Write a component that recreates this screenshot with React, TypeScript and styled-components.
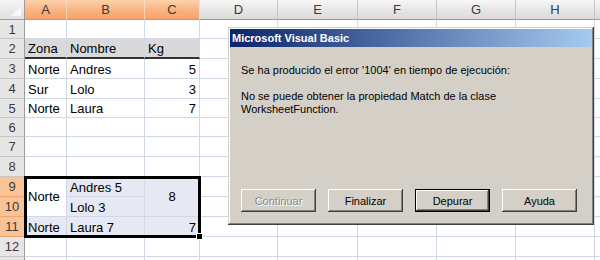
import React from 'react';
import styled, { createGlobalStyle, css } from 'styled-components';

const Global = createGlobalStyle`
  html, body { margin: 0; padding: 0; background: #fff; overflow: hidden; }
  #root { width: 600px; height: 260px; }
`;

const Sheet = styled.div`
  position: relative;
  width: 600px;
  height: 260px;
  overflow: hidden;
  display: grid;
  grid-template-columns: 25px 42px 78px 55px 78px 80px 79px 79px 79px 80px;
  grid-template-rows: 20px 19px 20px 20px 20px 19px 19px 20px 20px 20px 20px 20px 20px 20px;
  font-family: "Liberation Sans", Arial, sans-serif;
  font-size: 13px;
  color: #000;
`;

const Corner = styled.div`
  grid-column: 1;
  grid-row: 1;
  box-sizing: border-box;
  position: relative;
  background: linear-gradient(#f4f4f4, #e0e0e0);
  border-right: 1px solid #9c9c9c;
  border-bottom: 1px solid #9c9c9c;
`;

const CornerMark = styled.span`
  position: absolute;
  right: 3px;
  bottom: 3px;
  width: 10px;
  height: 10px;
  background: #f9f9f9;
  clip-path: polygon(100% 0, 100% 100%, 0 100%);
`;

const ColHead = styled.div<{ $sel?: boolean; $c: number }>`
  grid-column: ${(p) => p.$c};
  grid-row: 1;
  box-sizing: border-box;
  display: flex;
  align-items: center;
  justify-content: center;
  color: #3a3a3a;
  border-right: 1px solid ${(p) => (p.$sel ? '#fcd9b8' : '#c6c6c6')};
  border-bottom: 1px solid ${(p) => (p.$sel ? '#e98f4d' : '#9c9c9c')};
  background: ${(p) =>
    p.$sel ? 'linear-gradient(#fcd2ab, #f9b07c 60%, #f8a468)' : 'linear-gradient(#f7f7f7, #e4e4e4 60%, #dadada)'};
`;

const RowHead = styled.div<{ $sel?: boolean; $r: number }>`
  grid-column: 1;
  grid-row: ${(p) => p.$r};
  box-sizing: border-box;
  display: flex;
  align-items: center;
  justify-content: center;
  color: #3a3a3a;
  border-right: 1px solid ${(p) => (p.$sel ? '#e98f4d' : '#9c9c9c')};
  border-bottom: 1px solid ${(p) => (p.$sel ? '#f0a56b' : '#c6c6c6')};
  background: ${(p) => (p.$sel ? '#f9c395' : '#e6e6e6')};
`;

type Align = 'left' | 'right' | 'center';

const Cell = styled.div<{
  $c: number;
  $r: number;
  $rs?: number;
  $align?: Align;
  $mid?: boolean;
  $fill?: string;
  $heavy?: boolean;
}>`
  grid-column: ${(p) => p.$c};
  grid-row: ${(p) => p.$r} / span ${(p) => p.$rs ?? 1};
  box-sizing: border-box;
  min-width: 0;
  overflow: hidden;
  white-space: nowrap;
  display: flex;
  line-height: 15px;
  padding: 0 3px 1px 3px;
  align-items: ${(p) => (p.$mid ? 'center' : 'flex-end')};
  justify-content: ${(p) =>
    p.$align === 'right' ? 'flex-end' : p.$align === 'center' ? 'center' : 'flex-start'};
  background: ${(p) => p.$fill ?? '#fff'};
  border-right: 1px solid #d0d7e5;
  border-bottom: 1px solid #d0d7e5;
  ${(p) =>
    p.$heavy &&
    css`
      border-bottom: 2px solid #333;
    `}
`;

const Selection = styled.div`
  grid-column: 2 / 5;
  grid-row: 10 / 13;
  margin: -1px -1px -1px -1px;
  border: 3px solid #000;
  position: relative;
  pointer-events: none;
  z-index: 1;
`;

const FillHandle = styled.span`
  position: absolute;
  right: -5px;
  bottom: -5px;
  width: 5px;
  height: 5px;
  background: #000;
  border: 1px solid #fff;
`;

const Dialog = styled.div`
  position: absolute;
  left: 228px;
  top: 27px;
  width: 366px;
  height: 198px;
  box-sizing: border-box;
  z-index: 5;
  display: flex;
  flex-direction: column;
  padding: 2px;
  background: #d4d0c8;
  box-shadow: inset -1px -1px #404040, inset 1px 1px #d4d0c8, inset -2px -2px #808080, inset 2px 2px #fff;
  font-family: "Liberation Sans", Tahoma, sans-serif;
  font-size: 11px;
  color: #000;
`;

const TitleBar = styled.div`
  height: 18px;
  display: flex;
  align-items: center;
  padding-left: 2px;
  background: linear-gradient(90deg, #0a246a, #a6caf0);
  color: #fff;
  font-weight: bold;
  font-size: 11px;
`;

const Body = styled.div`
  flex: 1;
  display: flex;
  flex-direction: column;
  padding: 17px 11px 11px 11px;
`;

const Message = styled.p`
  margin: 0 0 13px 0;
  line-height: 13px;
`;

const ButtonRow = styled.div`
  margin-top: auto;
  display: flex;
  gap: 12px;
`;

const Button = styled.button<{ $default?: boolean }>`
  width: 75px;
  height: 23px;
  box-sizing: border-box;
  padding: 0;
  border: none;
  background: #d4d0c8;
  font-family: "Liberation Sans", Tahoma, sans-serif;
  font-size: 11px;
  color: #000;
  box-shadow: inset -1px -1px #404040, inset 1px 1px #fff, inset -2px -2px #808080, inset 2px 2px #d4d0c8;
  ${(p) =>
    p.$default &&
    css`
      box-shadow: inset 0 0 0 1px #000, inset -2px -2px #404040, inset 2px 2px #fff, inset -3px -3px #808080;
    `}
  &:disabled {
    color: #8c8a85;
    text-shadow: 1px 1px #fff;
  }
`;

const cols = ['A', 'B', 'C', 'D', 'E', 'F', 'G', 'H', ''];
const rows = [1, 2, 3, 4, 5, 6, 7, 8, 9, 10, 11, 12, 13];
const selCols = [0, 1, 2];
const selRows = [9, 10, 11];
const SEL = '#e6e9f4';
const HEAD = '#d9d9d9';

type CellDef = { t?: string; align?: Align; rs?: number; mid?: boolean; fill?: string; heavy?: boolean };

const data: Record<string, CellDef> = {
  '2-0': { t: 'Zona', fill: HEAD, heavy: true },
  '2-1': { t: 'Nombre', fill: HEAD, heavy: true },
  '2-2': { t: 'Kg', fill: HEAD, heavy: true },
  '3-0': { t: 'Norte' },
  '3-1': { t: 'Andres' },
  '3-2': { t: '5', align: 'right' },
  '4-0': { t: 'Sur' },
  '4-1': { t: 'Lolo' },
  '4-2': { t: '3', align: 'right' },
  '5-0': { t: 'Norte' },
  '5-1': { t: 'Laura' },
  '5-2': { t: '7', align: 'right' },
  '9-0': { t: 'Norte', rs: 2, mid: true },
  '9-1': { t: 'Andres 5', fill: SEL },
  '10-1': { t: 'Lolo 3', fill: SEL },
  '9-2': { t: '8', rs: 2, mid: true, align: 'center', fill: SEL },
  '11-0': { t: 'Norte', fill: SEL },
  '11-1': { t: 'Laura 7', fill: SEL },
  '11-2': { t: '7', align: 'right', fill: SEL },
};
const covered = new Set(['10-0', '10-2']);

export default function App() {
  return (
    <>
      <Global />
      <Sheet>
        <Corner>
          <CornerMark />
        </Corner>
        {cols.map((c, i) => (
          <ColHead key={'ch' + i} $c={i + 2} $sel={selCols.includes(i)}>
            {c}
          </ColHead>
        ))}
        {rows.map((r) => (
          <RowHead key={'rh' + r} $r={r + 1} $sel={selRows.includes(r)}>
            {r <= 12 ? r : ''}
          </RowHead>
        ))}
        {rows.map((r) =>
          cols.map((_, ci) => {
            const key = `${r}-${ci}`;
            if (covered.has(key)) return null;
            const d = data[key] ?? {};
            return (
              <Cell
                key={key}
                $c={ci + 2}
                $r={r + 1}
                $rs={d.rs}
                $align={d.align}
                $mid={d.mid}
                $fill={d.fill}
                $heavy={d.heavy}
              >
                {d.t}
              </Cell>
            );
          })
        )}
        <Selection>
          <FillHandle />
        </Selection>
        <Dialog>
          <TitleBar>Microsoft Visual Basic</TitleBar>
          <Body>
            <Message>Se ha producido el error '1004' en tiempo de ejecución:</Message>
            <Message>
              No se puede obtener la propiedad Match de la clase
              <br />
              WorksheetFunction.
            </Message>
            <ButtonRow>
              <Button disabled>Continuar</Button>
              <Button>Finalizar</Button>
              <Button $default>Depurar</Button>
              <Button>Ayuda</Button>
            </ButtonRow>
          </Body>
        </Dialog>
      </Sheet>
    </>
  );
}
